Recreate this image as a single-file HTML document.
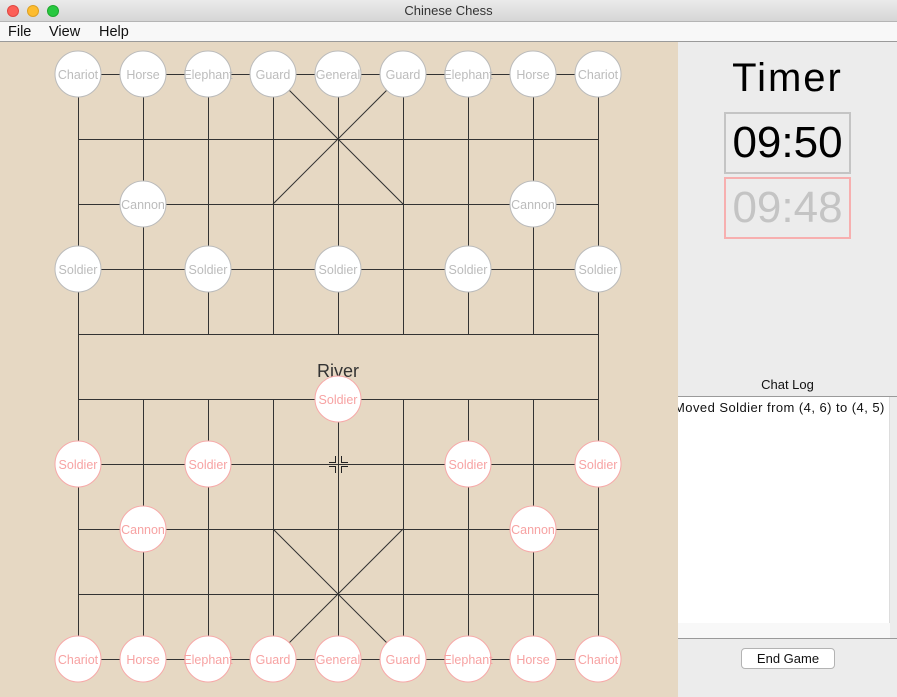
<!DOCTYPE html>
<html><head><meta charset="utf-8"><style>
*{margin:0;padding:0;box-sizing:border-box}
body{width:897px;height:697px;overflow:hidden;background:#ececec;font-family:"Liberation Sans","DejaVu Sans",sans-serif;position:relative}
.title{position:absolute;left:0;top:0;width:897px;height:22px;background:linear-gradient(#ebebeb,#d6d6d6);border-bottom:1px solid #b5b5b5;text-align:center;font-size:13px;line-height:21px;color:#333}
.dot{position:absolute;top:5px;width:12px;height:12px;border-radius:50%}
.menu{position:absolute;left:0;top:22px;width:897px;height:20px;background:#f8f8f8;border-bottom:1px solid #9a9a9a;font-size:14.5px;line-height:18px;color:#111}
.menu span{position:absolute;top:1px}
.board{position:absolute;left:0;top:42px}
.t{position:absolute;font-size:13px}
</style></head><body>
<div class="title">Chinese Chess
<div class="dot" style="left:7px;background:#fc5f57;border:1px solid #df4843"></div>
<div class="dot" style="left:27px;background:#fdbc2e;border:1px solid #dea123"></div>
<div class="dot" style="left:47px;background:#28c840;border:1px solid #1fa82f"></div>
</div>
<div class="menu"><span style="left:8px">File</span><span style="left:49px">View</span><span style="left:99px">Help</span></div>
<svg class="board" width="678" height="655" viewBox="0 42 678 655" xmlns="http://www.w3.org/2000/svg" font-family="Liberation Sans, DejaVu Sans, sans-serif">
<rect x="0" y="42" width="678" height="655" fill="#e6d8c3"/>
<g stroke="#333" stroke-width="1" fill="none" shape-rendering="crispEdges">
<path d="M78 74.5H598M78 139.5H598M78 204.5H598M78 269.5H598M78 334.5H598M78 399.5H598M78 464.5H598M78 529.5H598M78 594.5H598M78 659.5H598"/>
<path d="M78.5 74V659M598.5 74V659M143.5 74V334M208.5 74V334M273.5 74V334M338.5 74V334M403.5 74V334M468.5 74V334M533.5 74V334M143.5 399V659M208.5 399V659M273.5 399V659M338.5 399V659M403.5 399V659M468.5 399V659M533.5 399V659"/>
</g>
<g stroke="#333" stroke-width="1"><path d="M273 74L403 204M403 74L273 204M273 529L403 659M403 529L273 659"/></g>
<text x="338" y="377" font-size="18" fill="#333" text-anchor="middle">River</text>
<g font-size="12.5" text-anchor="middle">
<g fill="#fff" stroke="#bbb"><circle cx="78" cy="74" r="23"/><circle cx="143" cy="74" r="23"/><circle cx="208" cy="74" r="23"/><circle cx="273" cy="74" r="23"/><circle cx="338" cy="74" r="23"/><circle cx="403" cy="74" r="23"/><circle cx="468" cy="74" r="23"/><circle cx="533" cy="74" r="23"/><circle cx="598" cy="74" r="23"/><circle cx="143" cy="204" r="23"/><circle cx="533" cy="204" r="23"/><circle cx="78" cy="269" r="23"/><circle cx="208" cy="269" r="23"/><circle cx="338" cy="269" r="23"/><circle cx="468" cy="269" r="23"/><circle cx="598" cy="269" r="23"/></g>
<g fill="#bcbcbc"><text x="78" y="79">Chariot</text><text x="143" y="79">Horse</text><text x="208" y="79">Elephant</text><text x="273" y="79">Guard</text><text x="338" y="79">General</text><text x="403" y="79">Guard</text><text x="468" y="79">Elephant</text><text x="533" y="79">Horse</text><text x="598" y="79">Chariot</text><text x="143" y="209">Cannon</text><text x="533" y="209">Cannon</text><text x="78" y="274">Soldier</text><text x="208" y="274">Soldier</text><text x="338" y="274">Soldier</text><text x="468" y="274">Soldier</text><text x="598" y="274">Soldier</text></g>
<g fill="#fff" stroke="#f7a9a9"><circle cx="78" cy="659" r="23"/><circle cx="143" cy="659" r="23"/><circle cx="208" cy="659" r="23"/><circle cx="273" cy="659" r="23"/><circle cx="338" cy="659" r="23"/><circle cx="403" cy="659" r="23"/><circle cx="468" cy="659" r="23"/><circle cx="533" cy="659" r="23"/><circle cx="598" cy="659" r="23"/><circle cx="143" cy="529" r="23"/><circle cx="533" cy="529" r="23"/><circle cx="78" cy="464" r="23"/><circle cx="208" cy="464" r="23"/><circle cx="338" cy="399" r="23"/><circle cx="468" cy="464" r="23"/><circle cx="598" cy="464" r="23"/></g>
<g fill="#f7a3a3"><text x="78" y="664">Chariot</text><text x="143" y="664">Horse</text><text x="208" y="664">Elephant</text><text x="273" y="664">Guard</text><text x="338" y="664">General</text><text x="403" y="664">Guard</text><text x="468" y="664">Elephant</text><text x="533" y="664">Horse</text><text x="598" y="664">Chariot</text><text x="143" y="534">Cannon</text><text x="533" y="534">Cannon</text><text x="78" y="469">Soldier</text><text x="208" y="469">Soldier</text><text x="338" y="404">Soldier</text><text x="468" y="469">Soldier</text><text x="598" y="469">Soldier</text></g>
</g>
<g stroke="#222" stroke-width="1" fill="none" shape-rendering="crispEdges"><path d="M335.5 456V462.5H329M341.5 456V462.5H348M335.5 473V466.5H329M341.5 473V466.5H348"/></g>
</svg>
<div class="t" style="left:678px;top:56px;width:219px;text-align:center;font-size:40px;letter-spacing:2px;color:#000">Timer</div>
<div style="position:absolute;left:724px;top:112px;width:127px;height:62px;border:2px solid #c4c4c4;text-align:center;font-size:44px;line-height:58px;color:#000">09:50</div>
<div style="position:absolute;left:724px;top:177px;width:127px;height:62px;border:2px solid #f7afaf;text-align:center;font-size:44px;line-height:58px;color:#c4c4c4">09:48</div>
<div class="t" style="left:678px;top:377px;width:219px;text-align:center;color:#111">Chat Log</div>
<div style="position:absolute;left:678px;top:396px;width:219px;height:1px;background:#9a9a9a"></div>
<div style="position:absolute;left:678px;top:397px;width:212px;height:226px;background:#fff;border-right:1px solid #ddd;overflow:hidden"><div style="position:absolute;left:-4px;top:3px;font-size:13px;letter-spacing:0.45px;white-space:nowrap;color:#111">Moved Soldier from (4, 6) to (4, 5)</div></div>
<div style="position:absolute;left:678px;top:623px;width:212px;height:15px;background:#f8f8f8"></div>
<div style="position:absolute;left:678px;top:638px;width:219px;height:1px;background:#9a9a9a"></div>
<div style="position:absolute;left:741px;top:648px;width:94px;height:21px;background:#fff;border:1px solid #b3b3b3;border-radius:4px;text-align:center;font-size:13px;line-height:19px;color:#111">End Game</div>
</body></html>
